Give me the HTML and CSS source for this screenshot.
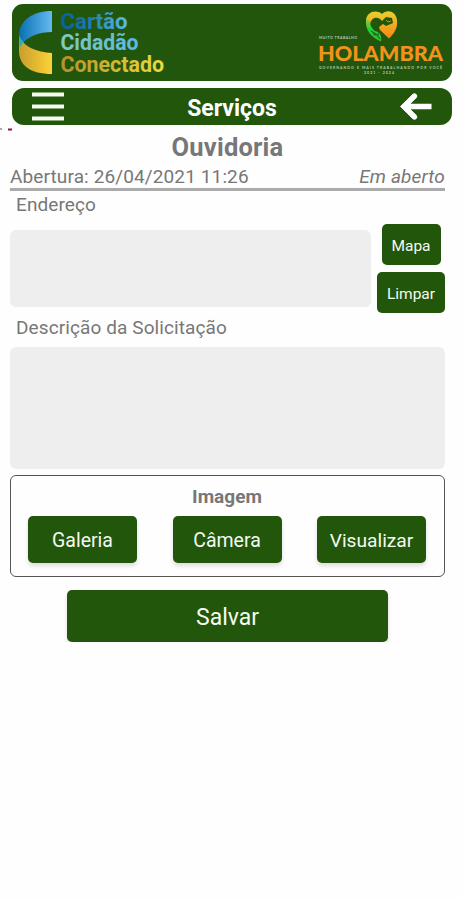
FILE: index.html
```html
<!DOCTYPE html>
<html lang="pt-BR">
<head>
<meta charset="utf-8">
<title>Ouvidoria</title>
<link rel="stylesheet" href="styles.css">
</head>
<body>
<header class="brand">
  <svg class="card-logo" width="160" height="77" viewBox="0 0 160 77">
    <defs>
      <linearGradient id="blue"><stop offset="0" stop-color="#0870b0"/><stop offset="1" stop-color="#65baf0"/></linearGradient>
      <linearGradient id="gold"><stop offset="0" stop-color="#c99d2c"/><stop offset="1" stop-color="#fbd337"/></linearGradient>
      <linearGradient id="t1"><stop offset="0" stop-color="#085f9a"/><stop offset=".4" stop-color="#1b77ae"/><stop offset="1" stop-color="#5cbce9"/></linearGradient>
      <linearGradient id="t2"><stop offset="0" stop-color="#83c9bd"/><stop offset="1" stop-color="#59b9e4"/></linearGradient>
      <linearGradient id="t3"><stop offset="0" stop-color="#b59028"/><stop offset="1" stop-color="#edda42"/></linearGradient>
    </defs>
    <path d="M40 7C20 7 7 17 7 32L9 41C16 32 27 28 40 28Z" fill="url(#blue)"/>
    <path d="M7 32V47C7 61 18 70 40 70V49C24 48 12 43 7 32Z" fill="url(#gold)"/>
    <path d="M7 31Q8 36 12 38L8 43Q7 41 7 38Z" fill="#35aeb0"/>
    <g class="card-name">
      <text x="48.500" y="24.500" textLength="67" lengthAdjust="spacingAndGlyphs" fill="url(#t1)">Cartão</text>
      <text x="48.500" y="46" textLength="78" lengthAdjust="spacingAndGlyphs" fill="url(#t2)">Cidadão</text>
      <text x="48.500" y="67.500" textLength="103.500" lengthAdjust="spacingAndGlyphs" fill="url(#t3)">Conectado</text>
    </g>
  </svg>
  <svg class="city-logo" width="134" height="77" viewBox="0 0 134 77">
    <defs>
      <linearGradient id="orange" x1="0" y1="0" x2="0" y2="1"><stop offset="0" stop-color="#fb8b1c"/><stop offset="1" stop-color="#ee981b"/></linearGradient>
      <linearGradient id="heart" x1="0" y1="0" x2="0" y2="1"><stop offset="0" stop-color="#e9cf30"/><stop offset="1" stop-color="#f98412"/></linearGradient>
      <linearGradient id="leaf" x1="0" y1="0" x2="0" y2="1"><stop offset="0" stop-color="#a4c92c"/><stop offset=".5" stop-color="#18cf38"/><stop offset="1" stop-color="#42b43a"/></linearGradient>
    </defs>
    <path d="M65 10C59 5 49 8 49 17L53 20C54 15 58 12 63 15L65 17L69 13L75 14L76 19L69 22L66 20L62 23L63 26L72 34.500C77 30 81 24 80 16C79 7 70 5 65 10Z" fill="url(#heart)"/>
    <path d="M49 15C48 27 54 33 64 37.500C65 32 63 28 58 27C54 24 53 20 53 17Z" fill="url(#leaf)"/>
    <path d="M54 27L59 30L63 35M59 31l-3-1M61 29v3" fill="none" stroke="#22560d" stroke-width="1"/>
    <path d="M69 16l2 2 3-1" fill="none" stroke="#a8a428" stroke-width="1"/>
    <text class="city-small" x="2" y="35" textLength="38">MUITO TRABALHO</text>
    <text class="city-name" x="1" y="56.500" textLength="125" lengthAdjust="spacingAndGlyphs" fill="url(#orange)">HOLAMBRA</text>
    <text class="city-small" x="2" y="64.500" textLength="123">GOVERNANDO E MAIS TRABALHANDO POR VOCÊ</text>
    <text class="city-small" x="47" y="69.500" textLength="30">2021 - 2024</text>
  </svg>
</header>
<nav class="topbar">
  <svg width="32" height="30" viewBox="0 0 32 30"><path d="M0 2.500h32M0 14.500h32M0 26.500h32" stroke="#f2fbee" stroke-width="4"/></svg>
  <span class="topbar-title">Serviços</span>
  <svg width="34" height="30" viewBox="0 0 34 30"><path d="M32.500 14.500H5M16 3.500L5 14.500L16 25.500" fill="none" stroke="#fff" stroke-width="5.300"/><path d="M15.500 4L5 14.500L15.500 25" fill="none" stroke="#fff" stroke-width="5.300" stroke-linecap="round"/></svg>
  <svg class="mark" width="14" height="5" viewBox="0 0 14 5"><path d="M0 2h2" stroke="#aaa" stroke-width="2"/><path d="M8 2.500h4" stroke="#8b1836" stroke-width="2"/></svg>
</nav>
<main>
  <h1>Ouvidoria</h1>
  <div class="status"><span class="opened">Abertura: 26/04/2021 11:26</span><em>Em aberto</em></div>
  <label class="label-address">Endereço</label>
  <div class="address">
    <div class="field"></div>
    <div class="address-actions"><button class="map">Mapa</button><button class="clear">Limpar</button></div>
  </div>
  <label class="label-description">Descrição da Solicitação</label>
  <div class="field description"></div>
  <section class="images">
    <h2>Imagem</h2>
    <div class="image-actions"><button>Galeria</button><button>Câmera</button><button>Visualizar</button></div>
  </section>
  <button class="save">Salvar</button>
</main>
</body>
</html>
```
FILE: styles.css
```css
* { box-sizing: border-box; }
body { margin: 0; padding-top: 4px; background: #fefefe; color: #777; font-family: Roboto, sans-serif; }
svg { display: block; }
.brand { display: flex; justify-content: space-between; width: 440px; height: 77px; margin-left: 12px; border-radius: 11px; background: #22560d; overflow: hidden; }
.city-logo { margin-right: 1px; }
.card-name { font: 700 21.500px Roboto, sans-serif; }
.city-name { font: 900 21.500px Lato, sans-serif; }
.city-small { font: 700 3.500px Lato, sans-serif; fill: #b9cbae; }
.topbar { position: relative; display: flex; align-items: center; justify-content: space-between; width: 440px; height: 37px; margin: 7px 0 0 12px; padding: 0 19px 0 20px; border-radius: 12px; background: #22560b; }
.topbar-title { color: #fff; font-size: 23px; font-weight: 700; line-height: 37px; padding: 4px 0 0 1px; }
.mark { position: absolute; left: -12px; top: 39px; }
main { display: flex; flex-direction: column; padding: 0 17px 0 10px; }
h1 { margin: 7px 0 0; font-size: 25.500px; line-height: 30px; font-weight: 700; text-align: center; letter-spacing: .2px; }
.status { display: flex; justify-content: space-between; height: 29px; border-bottom: 3px solid #aaa; font-size: 19px; line-height: 30px; }
.opened { letter-spacing: .12px; }
.status em { letter-spacing: .15px; }
label { margin-left: 6px; font-size: 19px; letter-spacing: .1px; }
.label-address { height: 39px; line-height: 28px; }
.field { background: #eee; border-radius: 6px; }
.address { display: flex; height: 77px; gap: 6px; }
.address .field { width: 361px; }
.address-actions { display: flex; flex-direction: column; align-items: center; gap: 7px; width: 68px; margin-top: -6px; }
button { padding: 0; border: 0; border-radius: 5px; background: #22560b; color: #f4faf0; font-family: Roboto, sans-serif; font-size: 19.500px; }
.address-actions button { flex: none; height: 41px; padding-top: 2px; font-size: 15.500px; }
.map { width: 59px; }
.clear { width: 68px; }
.label-description { height: 40px; line-height: 42px; }
.description { height: 122px; }
.images { height: 102px; margin-top: 6px; padding: 8px 18px 0 17px; border: 1.500px solid #555; border-radius: 6px; }
h2 { margin: 0; font-size: 19px; line-height: 26px; text-align: center; font-weight: 700; }
.image-actions { display: flex; justify-content: space-between; margin-top: 6px; }
.image-actions button { width: 109px; height: 47px; padding-top: 1px; box-shadow: 0 3px 4px #0002; }
.image-actions button:last-child { font-size: 19.200px; }
.save { align-self: center; width: 321px; height: 52px; margin-top: 13px; padding-top: 2px; font-size: 23px; box-shadow: 0 3px 4px #0002; }
```
